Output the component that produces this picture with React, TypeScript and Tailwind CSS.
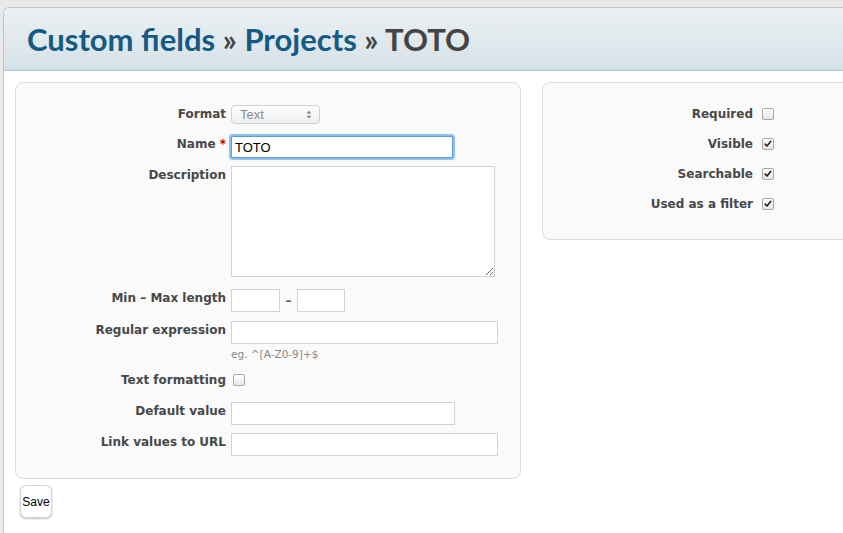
const labelFont = { fontFamily: '"DejaVu Sans", "Lucida Grande", sans-serif' };

const Check = ({ checked }: { checked?: boolean }) => (
  <span className="relative inline-block w-[12px] h-[12px] rounded-[2px] border border-[#a8a8a8] bg-gradient-to-b from-[#ffffff] to-[#e6e6e6] shadow-[inset_0_1px_0_#fff]">
    {checked && (
      <svg viewBox="0 0 12 12" className="absolute inset-0 w-[10px] h-[10px] m-auto">
        <path d="M2.6 6.2 L4.8 8.4 L9.4 2.8" fill="none" stroke="#222" strokeWidth="1.9" strokeLinecap="round" strokeLinejoin="round" />
      </svg>
    )}
  </span>
);

const Label = ({ children }: { children: React.ReactNode }) => (
  <div
    className="w-[210px] shrink-0 text-right text-[12px] leading-[16px] font-bold text-[#484848]"
    style={labelFont}
  >
    {children}
  </div>
);

const inputCls = "block bg-white border border-[#d2d2d2] outline-none";

export default function App() {
  return (
    <div className="min-h-screen bg-[#e9e9e9] pt-[7px] pl-[3px] overflow-hidden">
      <div className="w-[1000px] min-h-[526px] bg-white border-l border-t border-[#c4c4c4] rounded-tl-[6px]">
        <div className="h-[63px] flex items-center pl-[23px] bg-gradient-to-b from-[#ecf1f4] to-[#d5e1e7] border-b border-[#a3cbd7] rounded-tl-[6px]">
          <h2
            className="text-[31px] font-bold leading-none"
            style={{ fontFamily: "Lato, sans-serif" }}
          >
            <span className="text-[#155a83]">Custom fields</span>
            <span className="text-[#444]"> » </span>
            <span className="text-[#155a83]">Projects</span>
            <span className="text-[#444]"> » TOTO</span>
          </h2>
        </div>

        <div className="p-[11px]">
          <div className="flex items-start gap-[21px]">
            {/* left box */}
            <div className="w-[506px] bg-[#fafafa] border border-[#dcdcdc] rounded-[8px] pt-[22px] pb-[22px]">
              <div className="flex gap-[5px] pt-[1px]">
                <Label>Format</Label>
                <div className="relative w-[89px] h-[19px] -mt-[1px] rounded-[4px] border border-[#d0d0d0] bg-gradient-to-b from-[#fdfdfd] to-[#efefef] pl-[8px] text-[13px] leading-[17px] text-[#8a8a8a]" style={{ fontFamily: '"Liberation Sans", Arial, sans-serif' }}>
                  Text
                  <svg viewBox="0 0 8 12" className="absolute right-[7px] top-[3px] w-[6px] h-[11px]">
                    <path d="M4 1 L7 4.5 L1 4.5 Z M4 11 L7 7.5 L1 7.5 Z" fill="#777" />
                  </svg>
                </div>
              </div>

              <div className="flex gap-[5px] mt-[12px]">
                <Label>
                  Name <span className="text-[#bb0000]">*</span>
                </Label>
                <input
                  className="block w-[222px] h-[22px] bg-white border border-[#5b9ae0] shadow-[0_0_1px_2px_#8dbdf2] rounded-[2px] px-[3px] text-[13px] text-black outline-none"
                  style={{ fontFamily: '"Liberation Sans", Arial, sans-serif' }}
                  defaultValue="TOTO"
                />
              </div>

              <div className="flex gap-[5px] mt-[8px]">
                <div className="pt-[1px]">
                  <Label>Description</Label>
                </div>
                <textarea className={`${inputCls} w-[264px] h-[111px]`} />
              </div>

              <div className="flex gap-[5px] mt-[12px]">
                <div className="pt-[1px]">
                  <Label>Min – Max length</Label>
                </div>
                <div className="flex items-center">
                  <input className={`${inputCls} w-[49px] h-[23px]`} />
                  <span className="w-[17px] text-center text-[12px] font-bold text-[#555]" style={labelFont}>–</span>
                  <input className={`${inputCls} w-[48px] h-[23px]`} />
                </div>
              </div>

              <div className="flex gap-[5px] mt-[9px]">
                <div className="pt-[1px]">
                  <Label>Regular expression</Label>
                </div>
                <div>
                  <input className={`${inputCls} w-[267px] h-[23px]`} />
                  <div className="mt-[3px] text-[10.5px] leading-[14px] text-[#888]" style={labelFont}>
                    eg. ^[A-Z0-9]+$
                  </div>
                </div>
              </div>

              <div className="flex gap-[5px] mt-[10px]">
                <div className="pt-[1px]">
                  <Label>Text formatting</Label>
                </div>
                <div className="pl-[2px] pt-[3px] flex">
                  <Check />
                </div>
              </div>

              <div className="flex gap-[5px] mt-[14px]">
                <div className="pt-[1px]">
                  <Label>Default value</Label>
                </div>
                <input className={`${inputCls} w-[224px] h-[23px]`} />
              </div>

              <div className="flex gap-[5px] mt-[8px]">
                <div className="pt-[1px]">
                  <Label>Link values to URL</Label>
                </div>
                <input className={`${inputCls} w-[267px] h-[23px]`} />
              </div>
            </div>

            {/* right box */}
            <div className="w-[400px] bg-[#fafafa] border border-[#dcdcdc] rounded-[8px] pt-[23px] pb-[27px] flex flex-col gap-[14px]">
              {[
                { label: "Required", checked: false },
                { label: "Visible", checked: true },
                { label: "Searchable", checked: true },
                { label: "Used as a filter", checked: true },
              ].map((r) => (
                <div key={r.label} className="flex items-center gap-[9px]">
                  <Label>{r.label}</Label>
                  <Check checked={r.checked} />
                </div>
              ))}
            </div>
          </div>

          <button
            className="mt-[6px] ml-[5px] w-[32px] h-[33px] rounded-[6px] bg-white border border-[#d4d4d4] shadow-[0_1px_2px_rgba(0,0,0,0.25)] text-[12px] text-black"
            style={{ fontFamily: '"Liberation Sans", Arial, sans-serif' }}
          >
            Save
          </button>
        </div>
      </div>
    </div>
  );
}
